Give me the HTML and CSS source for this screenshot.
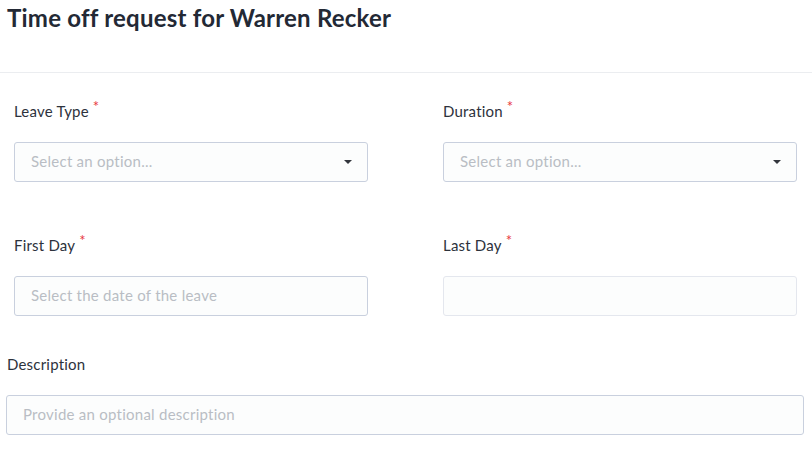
FILE: index.html
```html
<!DOCTYPE html>
<html>
<head>
<meta charset="utf-8">
<link rel="stylesheet" href="styles.css">
</head>
<body>
<header class="header">
  <h1 class="title">Time off request for Warren Recker</h1>
</header>
<form class="form">
  <div class="grid">
    <div class="field">
      <label class="label">Leave Type<span class="req">*</span></label>
      <div class="input select"><span class="ph">Select an option...</span><svg class="caret" width="8" height="4" viewBox="0 0 8 4"><path d="M0 0H8L4 4Z" fill="#33363d"/></svg></div>
    </div>
    <div class="field">
      <label class="label">Duration<span class="req">*</span></label>
      <div class="input select"><span class="ph">Select an option...</span><svg class="caret" width="8" height="4" viewBox="0 0 8 4"><path d="M0 0H8L4 4Z" fill="#33363d"/></svg></div>
    </div>
    <div class="field row2">
      <label class="label">First Day<span class="req">*</span></label>
      <div class="input"><span class="ph">Select the date of the leave</span></div>
    </div>
    <div class="field row2">
      <label class="label">Last Day<span class="req">*</span></label>
      <div class="input light"></div>
    </div>
  </div>
  <div class="field desc">
    <label class="label">Description</label>
    <div class="input"><span class="ph">Provide an optional description</span></div>
  </div>
</form>
</body>
</html>
```
FILE: styles.css
```css
* { box-sizing: border-box; }
body {
  margin: 0;
  background: #fff;
  font-family: Lato, "Open Sans", sans-serif;
  color: #2b303a;
}
.header {
  height: 73px;
  border-bottom: 1px solid #ebedf0;
  padding: 4px 7px 0;
}
.title {
  margin: 0;
  font-size: 24px;
  font-weight: 700;
  line-height: 28px;
  color: #232935;
  letter-spacing: 0.22px;
}
.form {
  padding: 28px 0 0;
}
.grid {
  display: grid;
  grid-template-columns: 354px 354px;
  column-gap: 75px;
  row-gap: 53px;
  padding: 0 14px;
}
.field {
  display: flex;
  flex-direction: column;
  gap: 21px;
}
.label {
  font-size: 15px;
  line-height: 20px;
  height: 20px;
  color: #2d323c;
  letter-spacing: 0.2px;
}
.req {
  color: #e8373c;
  font-size: 15px;
  vertical-align: top;
  position: relative;
  top: -5px;
  margin-left: 4px;
}
.input {
  height: 40px;
  border: 1px solid #c9d0de;
  border-radius: 3px;
  background: #fcfdfd;
  display: flex;
  align-items: center;
  padding: 0 15px 2px 16px;
  justify-content: space-between;
}
.input.light { border-color: #e4e7ee; }
.ph {
  font-size: 15px;
  color: #b9bdc4;
  letter-spacing: 0.25px;
}
.caret { margin-top: 2px; }
.desc {
  margin-top: 38px;
  padding: 0 8px 0 6px;
}
.desc .label { padding-left: 1px; }
```
